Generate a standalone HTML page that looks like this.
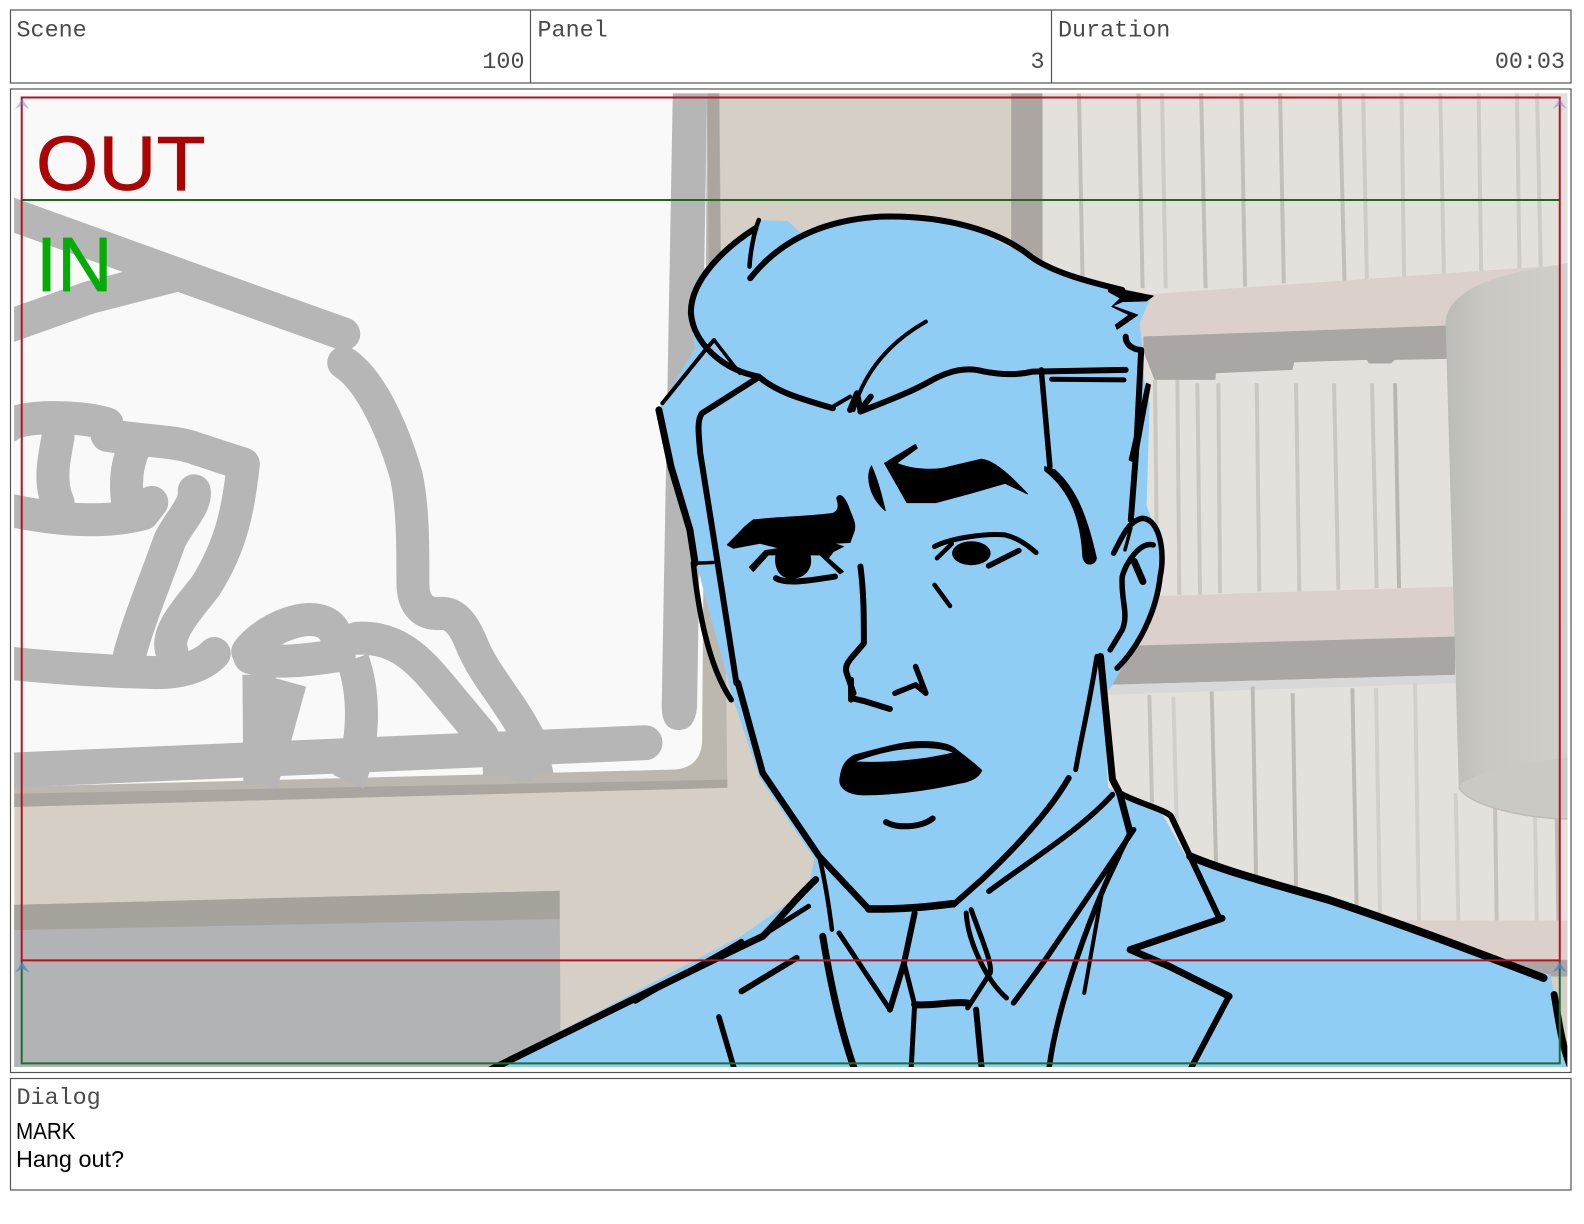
<!DOCTYPE html>
<html lang="en"><head><meta charset="utf-8"><title>Storyboard</title>
<style>
html,body{margin:0;padding:0;background:#fff;width:1584px;height:1224px;overflow:hidden}
svg{position:absolute;left:0;top:0;display:block}
.s *{vector-effect:non-scaling-stroke}
.g{fill:none;stroke:#b6b6b6;stroke-linecap:round;stroke-linejoin:round;stroke-width:33}
.k{fill:none;stroke:#000;stroke-linecap:round;stroke-linejoin:round;stroke-width:6}
.f{fill:#000;stroke:#000;stroke-width:1;stroke-linejoin:round}
.m{font-family:"Liberation Mono",monospace;font-size:23.4px;fill:#4a4a4a}
.d{font-family:"Liberation Sans",sans-serif;font-size:23px;fill:#000}
</style></head><body>
<svg class="s" width="1584" height="1224" viewBox="0 0 1568 1212" preserveAspectRatio="none">
<defs>
<clipPath id="c"><rect x="14" y="92.5" width="1537.5" height="964"/></clipPath>
<linearGradient id="l" x1="0" x2="1" y1="0" y2="0"><stop offset="0" stop-color="#bcbcb7"/><stop offset=".35" stop-color="#c9c8c3"/><stop offset="1" stop-color="#d0cfca"/></linearGradient>
</defs>
<g clip-path="url(#c)">
<rect x="14" y="92" width="1540" height="966" fill="#d6cfc6"/>
<!-- desk block -->
<polygon points="14,896 554,882 555,1058 14,1058" fill="#b2b3b5"/>
<polygon points="14,896 554,882 554,910 14,921" fill="#a5a39c"/>
<!-- whiteboard frame -->
<polygon points="698,92 712,92 720,780 14,799 14,770" fill="#bcb8b0"/>
<polygon points="14,786 720,772 720,780 14,799" fill="#aaa69f"/>
<polygon points="700,92 712,92 714,400 703,400" fill="#aaa69f"/>
<path d="M14,92H700L695,735Q693,760 668,762L14,779Z" fill="#f9f9f9"/>
<path d="M666,92H700L690,700Q688,723 672,723Q655,723 655,700Z" fill="#b6b6b6"/>
<!-- sketch on whiteboard (zoom space) -->
<g transform="translate(0,198) scale(.4419,.379)">
<path class="g" d="M20,35L400,195L650,300L770,350"/>
<path class="g" d="M20,330L200,255L400,195"/>
<path class="g" d="M770,425C830,470 880,600 910,720C925,800 925,900 925,1000C925,1060 950,1085 990,1080C1020,1080 1040,1110 1060,1170C1090,1250 1150,1320 1190,1420L1170,1480"/>
<path class="g" d="M20,590C40,565 170,560 240,585"/>
<path class="g" d="M130,620C120,680 110,740 130,790"/>
<path class="g" d="M20,810C100,830 220,850 320,820L340,790"/>
<path class="g" d="M240,615C320,630 400,630 440,650L545,690"/>
<path class="g" d="M300,650C280,700 280,760 290,820"/>
<path class="g" d="M545,690C535,800 520,900 460,1010C420,1070 370,1130 385,1180"/>
<path class="g" d="M435,760C440,800 400,840 380,890C350,990 310,1100 290,1190"/>
<path class="g" d="M20,1210C100,1220 200,1230 350,1235C420,1235 460,1210 480,1185"/>
<path class="g" d="M555,1180C600,1110 720,1060 750,1130"/>
<path class="g" d="M560,1195C620,1215 700,1200 760,1190"/>
<path class="g" d="M800,1145C880,1140 930,1190 980,1260L1080,1400"/>
<path class="g" style="stroke-linecap:butt" d="M580,1240L582,1525"/>
<path class="g" style="stroke-linecap:butt" d="M650,1260L610,1430L585,1525"/>
<path class="g" style="stroke-linecap:butt" d="M790,1200C820,1300 815,1430 780,1520"/>
<path class="g" style="stroke-width:35" d="M20,1490L1445,1418"/>
<polygon points="1080,1420 1220,1390 1240,1498 1082,1505" fill="#b6b6b6"/>
</g>
<!-- upper books -->
<rect x="1032" y="92" width="522" height="215" fill="#e4e1dc"/>
<rect x="1001" y="92" width="31" height="180" fill="#aba6a1"/>
<g transform="translate(989.9,84.1) scale(.3687,.33)" fill="none" stroke="#c3c0ba" stroke-width="4">
<path d="M212,25L222,600"/><path d="M372,25L383,610"/><path stroke="#cfccc7" d="M435,25L445,610"/><path d="M540,25L552,610"/><path d="M648,25L658,605"/><path d="M752,25L762,595"/><path d="M912,25L925,590"/><path stroke="#cfccc7" d="M975,25L985,585"/><path stroke="#cfccc7" d="M1078,25L1085,580"/><path stroke="#cfccc7" d="M1182,25L1192,575"/><path stroke="#cfccc7" d="M1285,25L1292,570"/><path stroke="#cfccc7" d="M1388,25L1395,565"/><path stroke="#cfccc7" d="M1442,25L1452,560"/>
</g>
<!-- shelf 1 -->
<polygon points="1128,292 1554,262 1554,320 1132,368" fill="#dbd0cb"/>
<g transform="translate(989.9,84.1) scale(.3687,.33)">
<rect x="385" y="810" width="1200" height="1070" fill="#e4e1dc"/>
<polygon points="385,755 1205,722 1205,822 1060,825 1050,836 990,836 985,825 790,832 785,855 580,865 578,885 415,885 385,800" fill="#aaa6a3"/>
</g>
<!-- middle books / lower books -->
<g transform="translate(1088.9,475.2) scale(.33)">
<rect x="120" y="0" width="1320" height="350" fill="#e4e1dc"/>
<g fill="none" stroke="#cbc8c2" stroke-width="4">
<path d="M165,-300L172,345"/><path d="M232,-300L238,345"/><path d="M292,-290L300,345"/><path d="M355,-290L360,340"/><path d="M470,-290L478,335"/><path d="M588,-290L598,335"/><path d="M702,-290L715,330"/><path d="M816,-290L830,325"/><path stroke="#bab7b1" d="M885,-290L897,325"/>
</g>
<polygon points="130,350 1065,320 1065,470 110,497" fill="#dbd0cb"/>
<polygon points="110,497 1065,470 1065,585 30,615" fill="#aaa6a3"/>
<polygon points="0,620 1065,590 1440,590 1440,1325 0,1325" fill="#e4e1dc"/>
<polygon points="20,615 1065,585 1065,610 20,645" fill="#d9d8d8"/>
<g fill="none" stroke="#c6c3bd" stroke-width="4">
<path d="M148,645L156,970"/><path stroke="#d3d0cb" d="M220,650L230,1030"/><path stroke="#bebbb5" d="M335,635L348,1150"/><path stroke="#bebbb5" d="M458,620L468,1190"/><path stroke="#bebbb5" d="M578,640L588,1225"/><path stroke="#bebbb5" d="M757,625L770,1285"/><path stroke="#d3d0cb" d="M828,625L840,1305"/><path stroke="#d3d0cb" d="M945,610L957,1325"/><path stroke="#d3d0cb" d="M1067,940L1075,1325"/><path d="M1185,980L1190,1325"/><path stroke="#d3d0cb" d="M1305,1000L1310,1325"/><path stroke="#bebbb5" d="M1370,1000L1375,1325"/>
</g>
<rect x="900" y="1322" width="540" height="118" fill="#dbd0cb"/>
<rect x="1200" y="1440" width="240" height="50" fill="#a9a6a3"/>
</g>
<!-- lamp -->
<path d="M1554,260L1500,270C1460,280 1432,295 1431,320L1444,779C1450,795 1500,810 1554,811Z" fill="url(#l)"/>
<path d="M1554,750C1500,755 1450,768 1444,779C1450,795 1500,810 1554,811Z" fill="#cbc9c4"/>
<path d="M1554,811C1500,810 1450,795 1444,779" fill="none" stroke="#bdbcb7" stroke-width="1.5"/>
<!-- blue figure -->
<polygon fill="#90cdf4" points="485,1058 735,926 800,880 806,850 752,770 725,690 690,560 652,405 688,345 682,310 700,265 745,225 752,218 780,219 792,230 880,213 960,225 1020,255 1060,272 1140,293 1128,320 1131,345 1133,380 1138,400 1135,500 1150,545 1140,610 1100,680 1092,690 1097,780 1150,805 1175,850 1300,885 1430,930 1505,960 1535,965 1538,985 1552,1058"/>
<!-- head strokes (zoom 2 space) -->
<g transform="translate(633.5,198) scale(.341,.33)">
<path class="k" d="M320,235C400,130 520,60 700,50C880,45 1040,90 1135,170C1200,220 1320,250 1400,270"/>
<path class="f" d="M1360,262L1490,288L1470,303L1400,305L1372,318L1445,345L1385,388L1380,375L1420,345L1370,320L1395,295L1360,275Z"/>
<path class="k" style="stroke-width:4.5" d="M345,60C330,100 320,160 318,200"/>
<path class="k" d="M335,85C250,140 145,240 148,340C155,430 240,510 345,530C400,580 480,600 560,625"/>
<path class="k" style="stroke-width:4" d="M215,420L190,450L65,610"/>
<path class="k" style="stroke-width:3.5" d="M215,420L290,520"/>
<path class="k" d="M340,535L180,640C165,660 170,700 175,760L215,1020L280,1450"/>
<path class="k" style="stroke-width:7" d="M55,630L90,800L145,990L160,1090"/>
<path class="k" style="stroke-width:3.5" d="M155,1090L212,1088"/>
<path class="k" style="stroke-width:5.5" d="M155,1090C170,1240 200,1400 265,1500"/>
<path class="k" d="M640,635C700,610 780,580 840,545C900,510 950,500 1000,515C1050,525 1100,525 1140,515L1410,510"/>
<path class="k" style="stroke-width:5" d="M1195,538L1405,540"/>
<path class="k" style="stroke-width:4" d="M560,620L610,590"/>
<path class="k" style="stroke-width:4" d="M830,365C720,430 650,520 620,630"/>
<path class="k" style="stroke-width:6" d="M610,630L630,580L640,630L670,590"/>
<path class="k" style="stroke-width:5.5" d="M1165,510L1190,800"/>
<path class="f" d="M1175,800L1205,810C1270,870 1300,960 1325,1075Q1320,1095 1300,1092Q1285,1085 1285,1060C1280,980 1260,880 1175,812Z"/>
<path class="k" d="M1410,410C1410,440 1440,450 1455,450L1440,760L1425,960"/>
<path class="f" d="M1470,550L1482,555L1440,790L1420,780Z"/>
<path class="k" style="stroke-width:5.5" d="M1375,1060C1400,1010 1420,960 1460,955C1510,960 1525,1060 1510,1130C1500,1230 1450,1340 1385,1405"/>
<path class="k" style="stroke-width:5.5" d="M1490,1035C1450,1025 1410,1090 1400,1130C1395,1200 1420,1240 1400,1290L1365,1350"/>
<path class="k" style="stroke-width:7" d="M1435,1085L1460,1145"/>
<path class="k" style="stroke-width:3.5" d="M1425,985L1408,1050"/>
<!-- right brow -->
<path class="f" d="M710,790L800,733L805,745L745,790C800,815 870,810 900,800L990,778C1020,780 1060,810 1125,882L1060,850L960,880L860,908L775,908Z"/>
<path class="f" d="M672,798C655,830 665,890 712,932C700,880 690,840 672,798Z"/>
<!-- right eye -->
<path class="k" style="stroke-width:5" d="M855,1040C900,1015 1000,1000 1060,1005C1100,1015 1130,1040 1150,1058"/>
<ellipse cx="962" cy="1060" rx="56" ry="36"/>
<path class="k" style="stroke-width:5.5" d="M1012,1098L1100,1052"/>
<path class="k" style="stroke-width:4.5" d="M862,1075L905,1032"/>
<path class="k" style="stroke-width:4.5" d="M855,1155L900,1218"/>
<path class="k" d="M640,1100C650,1180 650,1250 650,1330C620,1370 590,1390 600,1420L620,1480"/>
<path class="k" style="stroke-width:5.5" d="M740,1480L800,1455L830,1480L800,1400"/>
</g>
<!-- left brow and eye (true 3x crop) -->
<g transform="translate(692.9,475.2) scale(.33)">
<path class="f" d="M82,195L135,140L160,120C250,110 340,110 400,100C420,90 415,70 410,55C420,35 435,55 445,80C455,110 470,130 462,155L450,188L400,190L430,200L400,215L385,235L430,275L420,282L360,225L330,225C340,270 310,295 275,295C240,295 222,265 228,225L205,225L160,275L148,262L195,212L240,205L180,190L100,205Z"/>
<path class="k" style="stroke-width:6" d="M228,295C260,315 340,300 405,290"/>
</g>
<!-- lower strokes (zoom 3 space) -->
<g transform="translate(475.2,673) scale(.6995,.33)">
<path class="k" d="M525,0L525,60"/>
<path class="k" d="M525,55L545,65L580,88"/>
<path class="k" style="stroke-width:6.5" d="M365,10L400,280L480,530L550,688"/>
<path class="k" style="stroke-width:7.5" d="M550,688C600,690 640,680 670,672"/>
<path class="k" d="M833,295C810,380 770,480 710,600L670,675"/>
<path class="k" style="stroke-width:5" d="M873,-70C860,100 850,180 843,270"/>
<path class="k" style="stroke-width:7" d="M878,-70L895,300L905,340L920,460"/>
<path class="k" style="stroke-width:5.5" d="M895,345C850,450 780,540 720,635"/>
<path class="k" style="stroke-width:6" d="M905,340C930,370 970,390 978,410L1045,710"/>
<path class="k" style="stroke-width:7" d="M1050,716L920,810L975,860L1060,950"/>
<path class="k" style="stroke-width:6" d="M1060,950L1005,1170"/>
<path class="k" style="stroke-width:8" d="M1005,530C1050,570 1100,600 1200,660C1300,730 1400,810 1505,895"/>
<path class="k" style="stroke-width:7" d="M1520,945C1525,1000 1530,1100 1545,1170"/>
<path class="k" style="stroke-width:4" d="M905,530L880,640L855,940"/>
<path class="k" style="stroke-width:5.5" d="M925,450L800,840L755,970"/>
<path class="k" style="stroke-width:5.5" d="M920,460C860,700 815,1000 805,1170"/>
<path class="k" style="stroke-width:4.5" d="M480,530C490,620 495,700 498,750"/>
<path class="k" style="stroke-width:5" d="M508,760L580,990"/>
<path class="k" style="stroke-width:6" d="M615,700L600,850L580,990"/>
<path class="k" style="stroke-width:7" d="M485,770C495,900 510,1050 530,1170"/>
<path class="k" style="stroke-width:5" d="M688,700C690,780 715,900 745,955"/>
<path class="k" style="stroke-width:5" d="M695,690C710,780 725,850 722,880L690,985"/>
<path class="k" style="stroke-width:7" d="M615,975C640,980 665,965 690,970"/>
<path class="k" style="stroke-width:5" d="M600,850L615,975L610,1170"/>
<path class="k" style="stroke-width:6" d="M702,990L710,1170"/>
<path class="k" style="stroke-width:7" d="M475,600C440,670 420,730 400,770C300,870 150,1030 15,1170"/>
<path class="k" style="stroke-width:5" d="M370,785C320,850 270,900 220,965"/>
<path class="k" style="stroke-width:5" d="M465,680L405,760"/>
<path class="k" style="stroke-width:6" d="M448,835L370,935"/>
<path class="k" style="stroke-width:5.5" d="M338,1012L360,1170"/>
</g>
<!-- mouth (true 3x crop) -->
<g transform="translate(772.1,693) scale(.33)">
<path class="f" d="M180,235C185,200 195,180 225,165C300,145 370,125 420,125C470,125 510,130 530,150C555,170 590,195 605,212C595,235 570,245 540,250C450,270 350,285 250,285C205,285 175,265 180,235Z"/>
<path d="M228,185C280,165 340,148 420,145C460,143 500,150 518,158C450,175 340,190 228,185Z" fill="#90cdf4"/>
<path class="k" style="stroke-width:6" d="M318,367C350,385 420,385 458,356"/>
</g>
</g>
<!-- safe-area overlays -->
<g fill="none" stroke-width="2">
<path d="M21.5,951V1053H1544V951" stroke="#1b6f33"/>
<path d="M21.5,198H1544" stroke="#1c6a1c"/>
<path d="M21.5,96.5H1544V951H21.5Z" stroke="#b31420"/>
</g>
<g fill="#7d7dd0" opacity=".5"><path d="M15,108L22,98L29,108L22,104Z"/><path d="M1537,108L1544,98L1551,108L1544,104Z"/></g>
<g fill="#5a7ad0" opacity=".75"><path d="M15,963L22,953L29,963L22,959Z"/><path d="M1537,963L1544,953L1551,963L1544,959Z"/></g>
<text x="35.5" y="188" font-family="'Liberation Sans',sans-serif" font-size="76" fill="#aa0404" stroke="#aa0404" stroke-width=".7" textLength="168" lengthAdjust="spacingAndGlyphs">OUT</text>
<text x="35.5" y="288" font-family="'Liberation Sans',sans-serif" font-size="76" fill="#06ab06" stroke="#06ab06" stroke-width=".7" textLength="76" lengthAdjust="spacingAndGlyphs">IN</text>
</svg>
<svg width="1584" height="1224" viewBox="0 0 1584 1224">
<g fill="none" stroke="#555" stroke-width="1.2">
<rect x="10.5" y="10" width="1560.5" height="73"/>
<path d="M530.5,10V83M1051.5,10V83"/>
<rect x="10.5" y="89" width="1560.5" height="983.5"/>
<rect x="10.5" y="1078.5" width="1560.5" height="111.5"/>
</g>
<text class="m" x="16.5" y="36.5">Scene</text>
<text class="m" x="537.5" y="36.5">Panel</text>
<text class="m" x="1058" y="36.5">Duration</text>
<text class="m" x="524.5" y="68" text-anchor="end">100</text>
<text class="m" x="1044.5" y="68" text-anchor="end">3</text>
<text class="m" x="1565" y="68" text-anchor="end">00:03</text>
<text class="m" x="16.5" y="1104">Dialog</text>
<text class="d" x="16" y="1139" textLength="59.5" lengthAdjust="spacingAndGlyphs">MARK</text>
<text class="d" x="16" y="1167" textLength="108" lengthAdjust="spacingAndGlyphs">Hang out?</text>
</svg>
</body></html>
